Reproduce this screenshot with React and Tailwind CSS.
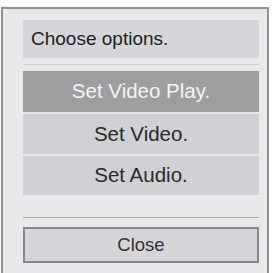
export default function App() {
  const rows = [
    { label: "Set Video Play.", active: true, h: "h-[41px]" },
    { label: "Set Video.", active: false, h: "h-[40px]" },
    { label: "Set Audio.", active: false, h: "h-[39px]" },
  ];

  return (
    <div className="w-[275px] h-[273px] overflow-hidden bg-white pt-[7px] pl-[1px] font-['Liberation_Sans',Arial,sans-serif]">
      <div className="w-[268px] h-[280px] border-2 border-b-0 border-[#8e9092] bg-[#e7e9eb] pt-[11px] pl-[20px] pr-[8px]">
        <div className="h-[38px] bg-[#d4d6d9] flex items-center pl-[8px] text-[19px] text-[#222]">
          Choose options.
        </div>
        <div className="h-[13px] flex flex-col justify-center">
          <div className="h-px bg-[#d0d2d4]" />
        </div>
        <div className="flex flex-col gap-[2px]">
          {rows.map((r) => (
            <div
              key={r.label}
              className={`${r.h} flex items-center justify-center text-[20.5px] ${
                r.active ? "bg-[#9c9ea0] text-[#f4f4f4]" : "bg-[#cfd1d4] text-[#2a2a2a]"
              }`}
            >
              {r.label}
            </div>
          ))}
        </div>
        <div className="h-[22px]" />
        <div className="h-px bg-[#a4a6a8]" />
        <div className="h-[9px]" />
        <div className="h-[36px] border-2 border-[#85878a] bg-[#d3d5d8] flex items-center justify-center text-[18.5px] text-[#333]">
          Close
        </div>
      </div>
    </div>
  );
}
